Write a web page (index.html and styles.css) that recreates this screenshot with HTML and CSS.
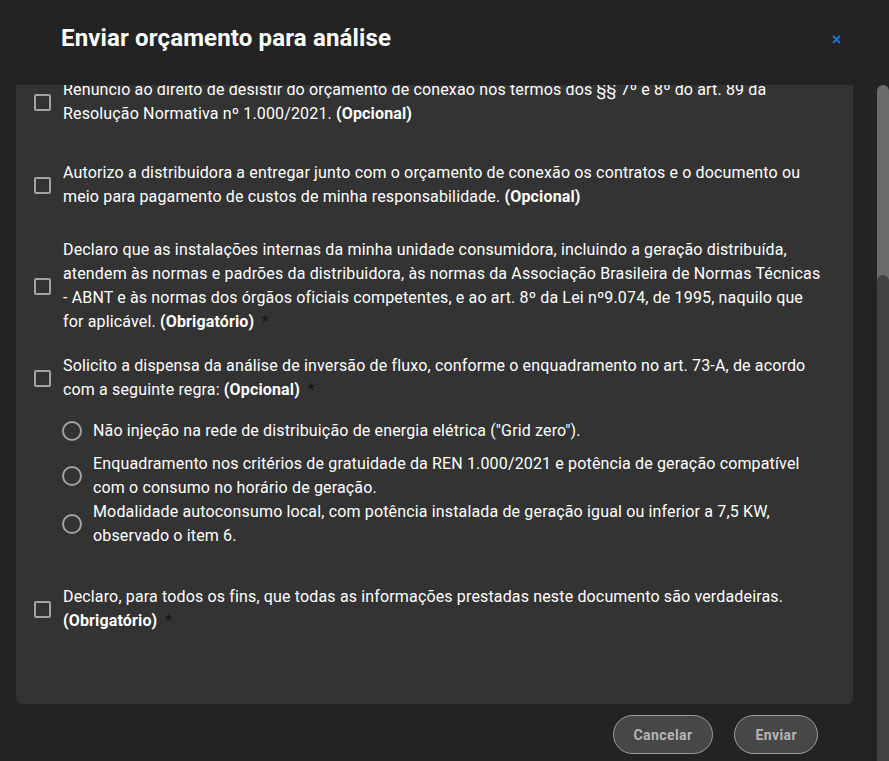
FILE: index.html
```html
<!DOCTYPE html>
<html lang="pt-BR">
<head>
<meta charset="utf-8">
<title>Enviar orçamento para análise</title>
<link rel="stylesheet" href="styles.css">
</head>
<body>
<div class="dialog">
  <header class="header">
    <h2 class="title">Enviar orçamento para análise</h2>
    <button class="close" aria-label="Fechar">
      <svg viewBox="0 0 9 9" width="9" height="9"><path d="M1 1L8 8M8 1L1 8" stroke="#1976d2" stroke-width="1.8" fill="none"/></svg>
    </button>
  </header>
  <div class="body">
    <div class="main">
      <section class="panel">
        <div class="list">
          <label class="item">
            <span class="cb"></span>
            <span class="text">Renuncio ao direito de desistir do orçamento de conexão nos termos dos §§ 7º e 8º do art. 89 da Resolução Normativa nº 1.000/2021. <b>(Opcional)</b></span>
          </label>
          <label class="item gap-35">
            <span class="cb"></span>
            <span class="text">Autorizo a distribuidora a entregar junto com o orçamento de conexão os contratos e o documento ou meio para pagamento de custos de minha responsabilidade. <b>(Opcional)</b></span>
          </label>
          <label class="item gap-29">
            <span class="cb"></span>
            <span class="text">Declaro que as instalações internas da minha unidade consumidora, incluindo a geração distribuída, atendem às normas e padrões da distribuidora, às normas da Associação Brasileira de Normas Técnicas - ABNT e às normas dos órgãos oficiais competentes, e ao art. 8º da Lei nº9.074, de 1995, naquilo que for aplicável. <b>(Obrigatório)</b> <span class="req">&thinsp;*</span></span>
          </label>
          <label class="item gap-20">
            <span class="cb"></span>
            <span class="text">Solicito a dispensa da análise de inversão de fluxo, conforme o enquadramento no art. 73-A, de acordo com a seguinte regra: <b>(Opcional)</b> <span class="req">&thinsp;*</span></span>
          </label>
          <div class="radio-group">
            <label class="radio">
              <span class="rb"></span>
              <span class="text">Não injeção na rede de distribuição de energia elétrica ("Grid zero").</span>
            </label>
            <label class="radio">
              <span class="rb"></span>
              <span class="text">Enquadramento nos critérios de gratuidade da REN 1.000/2021 e potência de geração compatível com o consumo no horário de geração.</span>
            </label>
            <label class="radio">
              <span class="rb"></span>
              <span class="text">Modalidade autoconsumo local, com potência instalada de geração igual ou inferior a 7,5 KW, observado o item 6.</span>
            </label>
          </div>
          <label class="item gap-37">
            <span class="cb"></span>
            <span class="text">Declaro, para todos os fins, que todas as informações prestadas neste documento são verdadeiras. <b>(Obrigatório)</b> <span class="req">&thinsp;*</span></span>
          </label>
        </div>
      </section>
      <div class="actions">
        <button class="btn">Cancelar</button>
        <button class="btn">Enviar</button>
      </div>
    </div>
    <div class="scrollbar">
      <div class="thumb"></div>
      <div class="track"></div>
    </div>
  </div>
</div>
</body>
</html>
```
FILE: styles.css
```css
html, body {
  margin: 0;
  height: 100%;
  background: #232323;
  overflow: hidden;
}
body {
  font-family: Roboto, "Liberation Sans", sans-serif;
  color: #fff;
}
.dialog {
  height: 761px;
  display: flex;
  flex-direction: column;
}
.header {
  height: 85px;
  box-sizing: border-box;
  display: flex;
  justify-content: space-between;
  align-items: flex-start;
  padding: 24px 48px 0 61px;
  flex: none;
}
.title {
  margin: 0;
  font-size: 24px;
  line-height: 28px;
  font-weight: 700;
  letter-spacing: 0.15px;
}
.close {
  margin-top: 11px;
  width: 9px;
  height: 9px;
  padding: 0;
  border: 0;
  background: none;
  display: block;
}
.close svg { display: block; }
.body {
  flex: 1;
  display: flex;
  min-height: 0;
}
.main {
  flex: 1;
  padding: 0 24px 0 16px;
  display: flex;
  flex-direction: column;
}
.panel {
  height: 619px;
  flex: none;
  background: #333333;
  border-radius: 0 0 6px 6px;
  overflow: hidden;
}
.list {
  margin-top: -7px;
  padding-right: 28px;
}
.item {
  display: flex;
  align-items: center;
  padding-left: 18px;
}
.gap-35 { margin-top: 35px; }
.gap-29 { margin-top: 29px; }
.gap-20 { margin-top: 20px; }
.gap-37 { margin-top: 37px; }
.cb {
  flex: none;
  width: 17px;
  height: 17px;
  border: 2px solid #a3a3a3;
  border-radius: 2px;
  box-sizing: border-box;
  margin-right: 12px;
}
.text {
  font-size: 16px;
  line-height: 24px;
  letter-spacing: 0.15px;
}
.text b { font-weight: 700; }
.req {
  color: #151515;
}
.radio-group {
  padding-left: 46px;
  margin-top: 8px;
}
.radio {
  display: flex;
  align-items: center;
  min-height: 42px;
}
.rb {
  flex: none;
  width: 20px;
  height: 20px;
  border: 2px solid #a3a3a3;
  border-radius: 50%;
  box-sizing: border-box;
  margin-right: 11px;
}
.actions {
  display: flex;
  justify-content: flex-end;
  gap: 21px;
  margin-top: 11px;
  padding-right: 35px;
}
.btn {
  height: 39px;
  padding: 0 20px;
  border: 1px solid #9c9c9c;
  border-radius: 20px;
  background: #474747;
  color: #b5b5b5;
  font-family: Roboto, "Liberation Sans", sans-serif;
  font-size: 14px;
  font-weight: 700;
  letter-spacing: 0.4px;
}
.scrollbar {
  width: 12px;
  flex: none;
  display: flex;
  flex-direction: column;
  border-radius: 6px 6px 0 0;
  background: linear-gradient(to bottom, #6b6b6b 196px, #424242 196px);
}
.thumb {
  height: 190px;
  flex: none;
}
.track {
  flex: 1;
  background: #424242;
  border-radius: 6px 6px 0 0;
}
```
